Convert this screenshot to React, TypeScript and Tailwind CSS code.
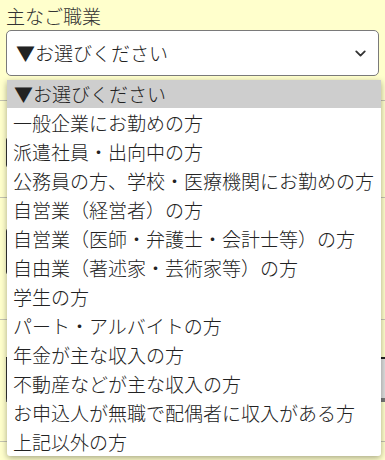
import { ChevronDown } from "lucide-react";

const options = [
  "▼お選びください",
  "一般企業にお勤めの方",
  "派遣社員・出向中の方",
  "公務員の方、学校・医療機関にお勤めの方",
  "自営業（経営者）の方",
  "自営業（医師・弁護士・会計士等）の方",
  "自由業（著述家・芸術家等）の方",
  "学生の方",
  "パート・アルバイトの方",
  "年金が主な収入の方",
  "不動産などが主な収入の方",
  "お申込人が無職で配偶者に収入がある方",
  "上記以外の方",
];

export default function App() {
  return (
    <div className="relative min-h-[460px] overflow-hidden bg-[#ffffcc] font-['Noto_Sans_CJK_JP',sans-serif] font-light text-[#333333]">
      {/* form behind the open list */}
      <div className="h-[101px] border-b border-[#c4c4b0] px-[6px] pt-[3px]">
        <div className="text-[19px] leading-[26px]">主なご職業</div>
        <div className="mt-[1px] flex h-[46px] items-center justify-between rounded-[5px] border border-[#7a7a7a] bg-white pl-[9px] pr-[9px]">
          <span className="text-[19px] leading-[26px] text-[#222222]">▼お選びください</span>
          <ChevronDown size={17} strokeWidth={2.6} className="text-[#333333]" />
        </div>
      </div>
      <div className="h-[97px] border-b border-[#c4c4b0] px-[6px] pt-[36px]">
        <div className="h-[31px] rounded-[3px] border border-[#333333] bg-white" />
      </div>
      <div className="h-[122px] border-b border-[#c4c4b0] px-[6px] pt-[30px]">
        <div className="h-[47px] rounded-[3px] border border-[#333333] bg-white" />
      </div>
      <div className="h-[122px] border-b border-[#c4c4b0] pl-[6px] pt-[37px]">
        <div className="h-[45px] w-[420px] border-t-2 border-b-4 border-l border-t-[#222222] border-b-[#777777] border-l-[#333333] bg-[#dddddd]" />
      </div>

      {/* open option list */}
      <ul className="absolute left-[7px] top-[80px] w-[374px] rounded-b-[3px] bg-white shadow-[0_2px_6px_rgba(0,0,0,0.35)]">
        {options.map((opt, i) => (
          <li
            key={i}
            className={
              i === 0
                ? "h-[28px] bg-[#cecece] pl-[7px] text-[19px] leading-[28px] text-[#222222]"
                : "h-[29px] pl-[6px] text-[19px] leading-[29px] text-[#222222]"
            }
          >
            {opt}
          </li>
        ))}
      </ul>
    </div>
  );
}
